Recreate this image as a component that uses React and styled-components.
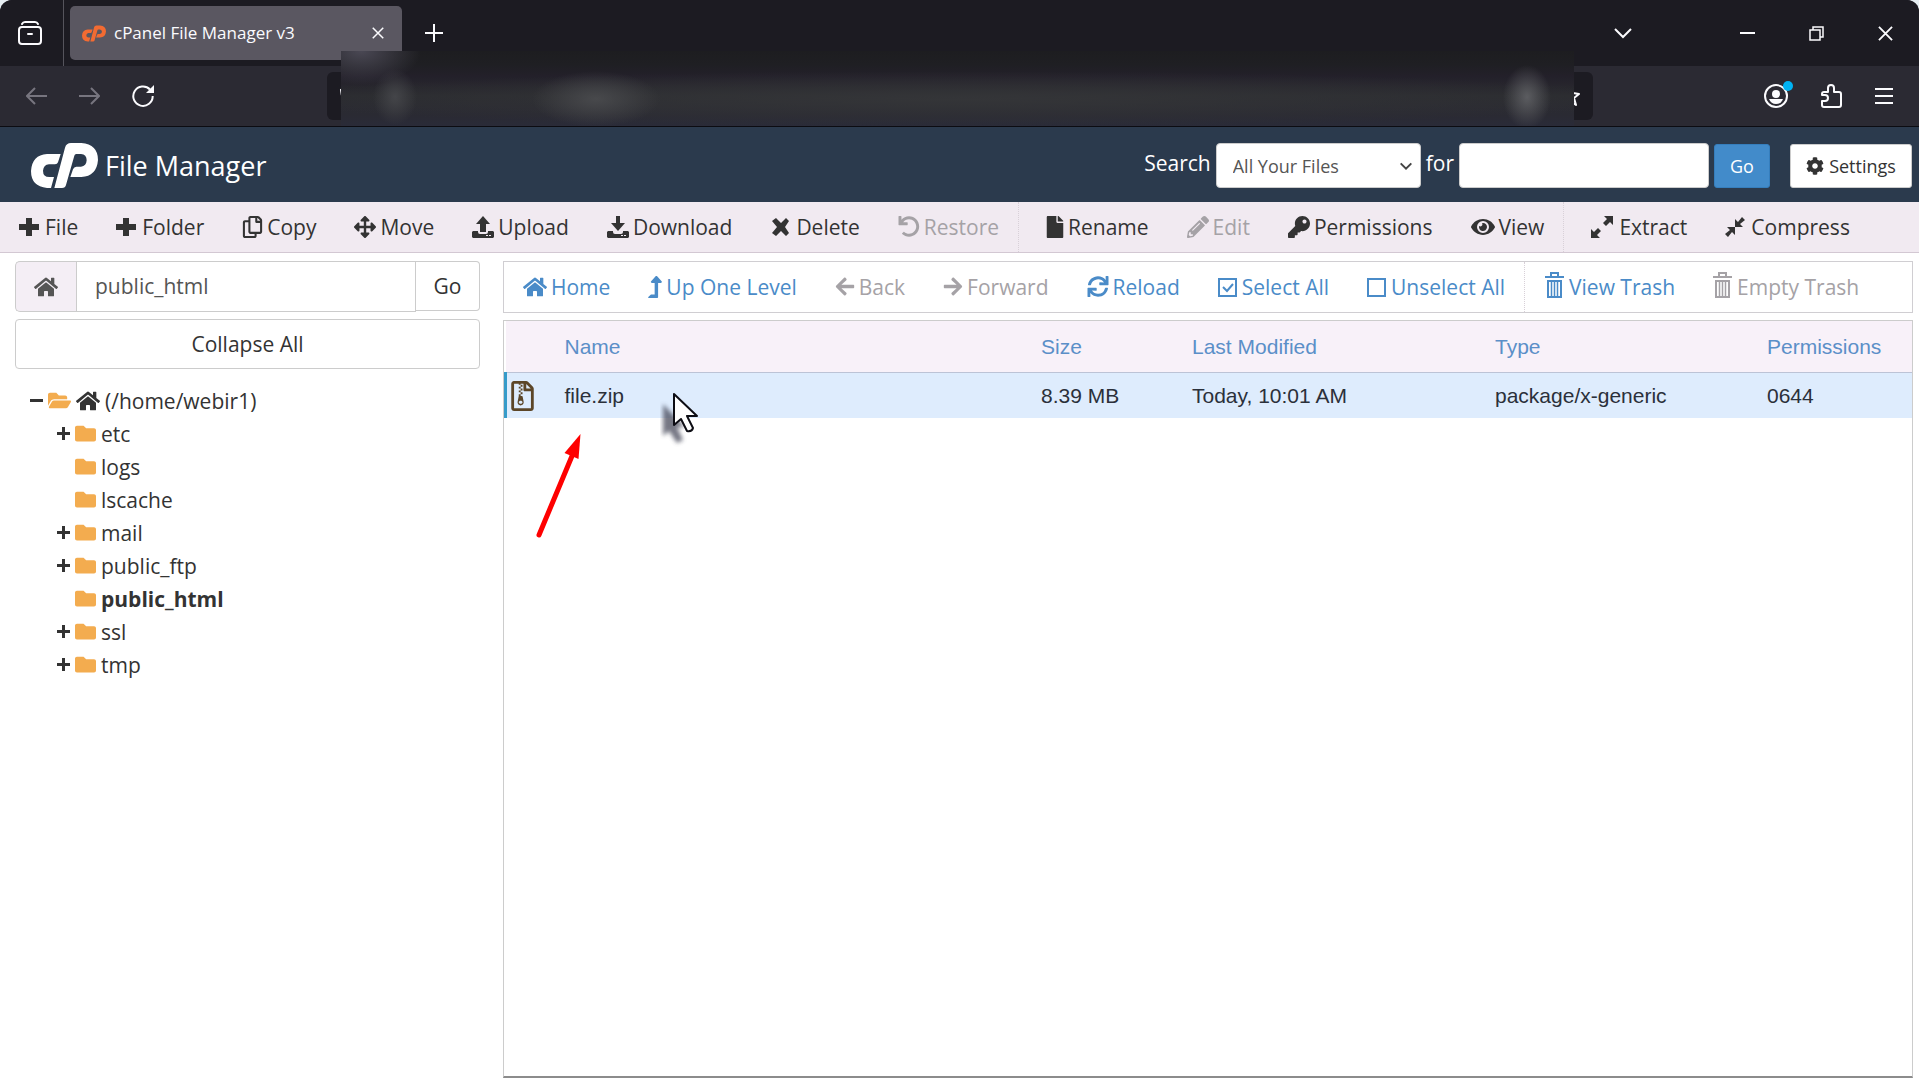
import React from 'react';
import styled, { createGlobalStyle } from 'styled-components';
import {
    FaArrowLeft, FaArrowRight, FaArrowsAlt, FaCog, FaEye, FaFile, FaFolder, FaFolderOpen,
    FaHome, FaKey, FaLevelUpAlt, FaPencilAlt, FaRegCopy, FaRegFileArchive, FaSync, FaUndo,
} from 'react-icons/fa';

const GlobalStyle = createGlobalStyle`
    * {
        box-sizing: border-box;
    }
    html, body, #root {
        height: 100%;
        margin: 0;
    }
    body {
        background-color: #e6eef2;
        color: #333;
        font-family: "Open Sans", "Noto Sans", sans-serif;
        font-size: 21px;
        line-height: 32px;
    }
    button, input, select {
        font: inherit;
        color: inherit;
        margin: 0;
    }
    button {
        padding: 0;
        border: none;
        background: none;
        white-space: nowrap;
    }
    svg {
        display: block;
        flex: none;
    }
`;

const Page = styled.div`
    display: flex;
    flex-direction: column;
    min-height: 100%;
    background-color: #fff;
    border-radius: 12px 12px 0 0;
    overflow: hidden;
`;

/* browser chrome */

const Chrome = styled.div`
    position: relative;
    background-color: #2b2a33;
    color: #fbfbfe;
    border-bottom: 1px solid #0c0c12;
`;

const TabStrip = styled.div`
    display: flex;
    align-items: center;
    height: 66px;
    background-color: #1c1b22;
`;

const FirefoxView = styled.button`
    display: flex;
    align-items: center;
    justify-content: center;
    width: 64px;
    height: 66px;
    padding-right: 4px;
    border-right: 1px solid #55545c;
`;

const Tab = styled.div`
    display: flex;
    align-items: center;
    gap: 8px;
    width: 332px;
    height: 54px;
    margin: 0 23px 0 6px;
    padding: 0 18px 0 12px;
    border-radius: 5px;
    background-color: #5a5761;
    font-size: 17px;
`;

const TabTitle = styled.span`
    flex: 1;
    white-space: nowrap;
`;

const ChromeButton = styled.button`
    display: flex;
    align-items: center;
    justify-content: center;
    color: ${props => (props.$dim ? '#77757f' : '#fbfbfe')};
`;

const WindowButtons = styled.div`
    display: flex;
    align-items: center;
    gap: 54px;
    margin-left: auto;
    padding-right: 26px;

    button:first-child {
        margin-right: 54px;
    }
`;

const NavBar = styled.div`
    display: flex;
    align-items: center;
    height: 60px;
    padding: 0 26px;
`;

const HistoryButtons = styled.div`
    display: flex;
    gap: 32px;
    width: 301px;
`;

const UrlBar = styled.div`
    display: flex;
    align-items: center;
    flex: 1;
    height: 48px;
    padding: 0 12px;
    border-radius: 6px;
    background-color: #1c1b22;
`;

const UrlInput = styled.input`
    flex: 1;
    border: none;
    outline: none;
    background: none;
`;

const BrowserTools = styled.div`
    display: flex;
    align-items: center;
    justify-content: flex-end;
    gap: 33px;
    width: 300px;

    svg {
        overflow: visible;
    }
`;

/* smudge over the address */
const Redaction = styled.div`
    position: absolute;
    top: 51px;
    bottom: 0;
    left: 341px;
    right: 345px;
    background:
        radial-gradient(60px 34px at 20px 0, #4a4854 0%, #4a485400 100%),
        radial-gradient(22px 28px at 54px 46px, #444549 0%, #44454900 100%),
        radial-gradient(64px 28px at 255px 48px, #48494c 0%, #48494c00 100%),
        radial-gradient(24px 32px at calc(100% - 47px) 46px, #5b5c60 0%, #5b5c6000 100%),
        radial-gradient(56% 28px at 50% 48px, #343538 0%, #34353800 100%),
        linear-gradient(#1d1d20 0%, #1f1f23 18%, #23202a 34%, #2b2c30 60%, #2a2a33 86%, #2a2b38 100%);
`;

/* file manager header */

const Header = styled.header`
    display: flex;
    align-items: center;
    justify-content: space-between;
    height: 75px;
    padding: 0 7px 0 31px;
    background-color: #2b3a4d;
    color: #fff;
`;

const Brand = styled.h1`
    display: flex;
    align-items: center;
    gap: 7px;
    margin: 0;
    padding-top: 2px;
    font-size: 27px;
    font-weight: 400;
`;

const SearchForm = styled.form`
    display: flex;
    align-items: center;
    gap: 5px;
    padding-top: 2px;

    label {
        padding-bottom: 6px;
    }
`;

const SelectBox = styled.div`
    display: grid;
    align-items: center;
    width: 205px;

    > * {
        grid-area: 1 / 1;
    }
    svg {
        justify-self: end;
        margin-right: 9px;
        pointer-events: none;
        color: #444;
    }
`;

const Select = styled.select`
    width: 100%;
    height: 45px;
    padding: 0 16px;
    border: 1px solid #ccc;
    border-radius: 4px;
    appearance: none;
    background-color: #fff;
    color: #555;
    font-size: 18px;
`;

const SearchInput = styled.input`
    width: 250px;
    height: 45px;
    padding: 0 16px;
    border: 1px solid #ccc;
    border-radius: 4px;
    background-color: #fff;
    color: #555;
`;

const HeaderButton = styled.button`
    display: flex;
    align-items: center;
    justify-content: center;
    gap: 5px;
    width: ${props => (props.$primary ? '56px' : '122px')};
    height: 44px;
    margin-left: ${props => (props.$primary ? '0' : '15px')};
    border: 1px solid ${props => (props.$primary ? '#357ebd' : '#ccc')};
    border-radius: 3px;
    background-color: ${props => (props.$primary ? '#428bca' : '#fff')};
    color: ${props => (props.$primary ? '#fff' : '#333')};
    font-size: 18px;
`;

/* toolbars */

const Toolbar = styled.div`
    display: flex;
    align-items: stretch;
    height: 51px;
    background-color: #f1eaf1;
    border-bottom: 1px solid #d3c8d3;
`;

const ToolDivider = styled.span`
    width: 9px;
    border-left: 1px dotted #d8d0d8;
`;

const ActionBar = styled(Toolbar)`
    height: 52px;
    background-color: #fff;
    border: 1px solid #d0ced2;
    color: #4a8bc8;

    ${ToolDivider} {
        width: 2px;
    }
`;

const Tool = styled.button`
    display: flex;
    align-items: center;
    gap: 4px;
    padding: 0 19px 1px;
    color: ${props => (props.disabled ? '#a5a2a6' : 'inherit')};
`;

/* body */

const Body = styled.main`
    display: flex;
    flex: 1;
    gap: 23px;
    padding: 8px 6px 1px 15px;
`;

const Sidebar = styled.nav`
    display: flex;
    flex-direction: column;
    gap: 7px;
    width: 465px;
`;

const PathForm = styled.form`
    display: flex;
    height: 51px;
`;

const PathHome = styled.button`
    display: flex;
    align-items: center;
    justify-content: center;
    width: 61px;
    border: 1px solid #ccc;
    border-right: none;
    border-radius: 5px 0 0 5px;
    background-color: #f4eef5;
    color: #555;
`;

const PathInput = styled.input`
    flex: 1;
    min-width: 0;
    padding: 0 18px 2px;
    border: 1px solid #ccc;
    color: #555;
`;

const PathGo = styled.button`
    width: 64px;
    height: 50px;
    border: 1px solid #ccc;
    border-left: none;
    border-radius: 0 4px 4px 0;
`;

const CollapseButton = styled.button`
    height: 50px;
    border: 1px solid #ccc;
    border-radius: 4px;
`;

const Tree = styled.ul`
    margin: 0;
    padding: ${props => (props.$nested ? '0 0 0 27px' : '8px 0 0 15px')};
    list-style: none;
`;

const TreeRow = styled.div`
    display: flex;
    align-items: center;
    gap: 5px;
    height: 33px;
    font-weight: ${props => (props.$current ? 700 : 400)};
    color: #333;
`;

const Toggle = styled.span`
    display: flex;
    width: 13px;
`;

const Content = styled.section`
    display: flex;
    flex: 1;
    flex-direction: column;
    gap: 7px;
    min-width: 0;
`;

const FilePane = styled.div`
    flex: 1;
    border: 1px solid #ccc;
    border-bottom: 2px solid #8c8c8c;
`;

const FileTable = styled.table`
    width: 100%;
    border-collapse: collapse;
    table-layout: fixed;
    font-family: "Liberation Sans", Arial, sans-serif;
    font-size: 21px;
    line-height: 24px;

    th, td {
        padding: 2px 0 0;
        text-align: left;
        font-weight: 400;
        white-space: nowrap;
    }
    th {
        height: 51px;
        border-bottom: 1px solid #bcc3d6;
        background-color: #f8f1f9;
        color: #5b8fc8;
    }
    td {
        height: 46px;
        background-color: #deecfd;
        color: #2b303a;
    }
    td:first-child {
        border-left: 3px solid #359bc9;
        padding-left: 4px;
        color: #5c4628;
    }
`;

const Col = styled.col`
    width: ${props => (props.$w ? `${props.$w}px` : 'auto')};
`;

/* pointer and hint arrow floating over the list */
const Overlay = styled.svg`
    position: absolute;
    left: 530px;
    top: 385px;
    pointer-events: none;
`;

/* icons */

const sized = (Icon, width, height) => styled(Icon)`
    width: ${width}px;
    height: ${height}px;
`;

const CopyIcon = sized(FaRegCopy, 21, 22);
const MoveIcon = sized(FaArrowsAlt, 22, 22);
const UndoIcon = sized(FaUndo, 22, 21);
const FileIcon = sized(FaFile, 18, 22);
const PencilIcon = sized(FaPencilAlt, 22, 22);
const KeyIcon = sized(FaKey, 22, 22);
const EyeIcon = sized(FaEye, 24, 22);
const HomeIcon = sized(FaHome, 24, 22);
const LevelUpIcon = sized(FaLevelUpAlt, 14, 22);
const BackIcon = sized(FaArrowLeft, 20, 21);
const ForwardIcon = sized(FaArrowRight, 20, 21);
const ReloadIcon = sized(FaSync, 22, 21);
const ZipIcon = sized(FaRegFileArchive, 23, 30);

const FolderIcon = styled(FaFolder)`
    width: 21px;
    height: 21px;
    color: #f3ac4f;
`;

const OpenFolderIcon = styled(FaFolderOpen)`
    width: 23px;
    height: 21px;
    color: #f3ac4f;
`;

const CpLogo = ({ width, height, color }) => (
    <svg width={width} height={height} viewBox="0 0 201 135" fill={color} aria-hidden="true">
        <path d="M48 33h41l-8 25q-2 6-9 6H54q-16 1-18 19 0 19 19 19h14l-9 33H48Q0 130 0 84 3 36 48 33z" />
        <path d="M70 135 102 14Q106 0 120 0h31q50 4 50 51-4 49-50 51h-33l8-23q3-8 10-8h14q16-2 17-19 0-18-17-19h-14q-5 0-6 5L105 126q-2 9-12 9z" />
    </svg>
);

const Plus = () => (
    <svg width="22" height="20" viewBox="0 0 22 20" fill="currentColor">
        <path d="M7 1h6v6h7v6h-7v6H7v-6H0V7h7z" />
    </svg>
);

const Tray = ({ up }) => (
    <svg width="22" height="22" viewBox="0 0 22 22" fill="currentColor">
        <path d={up ? 'M11 0l7 8h-4v8H8V8H4z' : 'M9 0h4v7h5l-7 8-7-8h5z'} />
        <path fillRule="evenodd" d="M1 15h5v1q0 2 2 2h6q2 0 2-2v-1h5l1 1v5l-1 1H1l-1-1v-5zM14 19h2v1h-2zm3 0h2v1h-2z" />
    </svg>
);

const Cross = () => (
    <svg width="22" height="20" viewBox="-2 0 22 20" fill="currentColor">
        <path d="M4 1l5 5 5-5 3 3-4 6 4 6-3 3-5-5-5 5-4-3 5-6-5-6z" />
    </svg>
);

const Extract = () => (
    <svg width="24" height="22" viewBox="0 0 24 22" fill="currentColor">
        <path d="M13 0h9v9l-3-3-4 4-3-3 4-4zM0 13l3 3 4-4 3 3-4 4 3 3H0z" />
    </svg>
);

const Compress = () => (
    <svg width="22" height="20" viewBox="0 0 22 20" fill="currentColor">
        <path d="M17 0l3 3-5 4 3 3h-8V2l3 3zM2 10h8v8l-3-3-4 5-3-3 5-4z" />
    </svg>
);

const Box = ({ checked }) => (
    <svg width="20" height="22" viewBox="0 0 20 22" fill="none" stroke="currentColor" strokeWidth="2">
        <path d="M1 3h17v17H1z" />
        {checked && <path d="M5 11l4 4 6-7" />}
    </svg>
);

const Trash = () => (
    <svg width="20" height="30" viewBox="0 0 20 30" fill="none" stroke="currentColor">
        <path strokeWidth="2" d="M0 5h19M6 4V1h7v3M2 9h15M3 8v17h13V8" />
        <path strokeWidth="1.5" d="M6.500 9v16M9.500 9v16M12.500 9v16" />
    </svg>
);

const Chevron = ({ size }) => (
    <svg width={size} height={size} viewBox="0 0 18 18" fill="none" stroke="currentColor" strokeWidth={size > 14 ? 2 : 3}>
        <path d="M1 5l8 8 8-8" />
    </svg>
);

const Close = ({ size }) => (
    <svg width={size} height={size} viewBox="0 0 16 16" fill="none" stroke="currentColor" strokeWidth="2">
        <path d="M1 1l14 14M15 1L1 15" />
    </svg>
);

const ToggleSign = ({ open }) => (
    <svg width="13" height="13" viewBox="0 0 13 13" fill="none" stroke="currentColor" strokeWidth="3">
        <path d={open ? 'M0 6.5h13' : 'M0 6.5h13M6.5 0v13'} />
    </svg>
);

const fileTools = [
    { label: 'File', icon: <Plus /> },
    { label: 'Folder', icon: <Plus /> },
    { label: 'Copy', icon: <CopyIcon /> },
    { label: 'Move', icon: <MoveIcon /> },
    { label: 'Upload', icon: <Tray up /> },
    { label: 'Download', icon: <Tray /> },
    { label: 'Delete', icon: <Cross /> },
    { label: 'Restore', icon: <UndoIcon />, disabled: true },
    { divider: true },
    { label: 'Rename', icon: <FileIcon /> },
    { label: 'Edit', icon: <PencilIcon />, disabled: true },
    { label: 'Permissions', icon: <KeyIcon /> },
    { label: 'View', icon: <EyeIcon /> },
    { divider: true },
    { label: 'Extract', icon: <Extract /> },
    { label: 'Compress', icon: <Compress /> },
];

const viewTools = [
    { label: 'Home', icon: <HomeIcon /> },
    { label: 'Up One Level', icon: <LevelUpIcon /> },
    { label: 'Back', icon: <BackIcon />, disabled: true },
    { label: 'Forward', icon: <ForwardIcon />, disabled: true },
    { label: 'Reload', icon: <ReloadIcon /> },
    { label: 'Select All', icon: <Box checked /> },
    { label: 'Unselect All', icon: <Box /> },
    { divider: true },
    { label: 'View Trash', icon: <Trash /> },
    { label: 'Empty Trash', icon: <Trash />, disabled: true },
];

const folders = [
    { name: 'etc', expandable: true },
    { name: 'logs' },
    { name: 'lscache' },
    { name: 'mail', expandable: true },
    { name: 'public_ftp', expandable: true },
    { name: 'public_html', current: true },
    { name: 'ssl', expandable: true },
    { name: 'tmp', expandable: true },
];

const renderTools = tools => tools.map((tool, i) => (
    tool.divider
        ? <ToolDivider key={i} />
        : <Tool key={i} type="button" disabled={tool.disabled}>{tool.icon}{tool.label}</Tool>
));

function BrowserChrome() {
    return (
        <Chrome>
            <TabStrip>
                <FirefoxView type="button" aria-label="Firefox View">
                    <svg width="24" height="24" viewBox="0 0 24 24" fill="none" stroke="currentColor" strokeWidth="2" strokeLinecap="round">
                        <rect x="1" y="6" width="22" height="17" rx="3" />
                        <path d="M4 3q1-2 3-2h10q2 0 3 2M10 13h4" />
                    </svg>
                </FirefoxView>
                <Tab>
                    <CpLogo width={24} height={17} color="#f36b32" />
                    <TabTitle>cPanel File Manager v3</TabTitle>
                    <ChromeButton type="button" aria-label="Close tab"><Close size={12} /></ChromeButton>
                </Tab>
                <ChromeButton type="button" aria-label="New tab">
                    <svg width="18" height="18" viewBox="0 0 18 18" fill="none" stroke="currentColor" strokeWidth="2">
                        <path d="M9 0v18M0 9h18" />
                    </svg>
                </ChromeButton>
                <WindowButtons>
                    <ChromeButton type="button" aria-label="List tabs"><Chevron size={18} /></ChromeButton>
                    <ChromeButton type="button" aria-label="Minimize">
                        <svg width="15" height="15" viewBox="0 0 15 15"><path d="M0 6h15v2H0z" fill="currentColor" /></svg>
                    </ChromeButton>
                    <ChromeButton type="button" aria-label="Restore">
                        <svg width="15" height="15" viewBox="0 0 15 15" fill="none" stroke="currentColor" strokeWidth="1.5">
                            <path d="M1 4h10v10H1zM4 4V1h10v10h-3" />
                        </svg>
                    </ChromeButton>
                    <ChromeButton type="button" aria-label="Close"><Close size={15} /></ChromeButton>
                </WindowButtons>
            </TabStrip>
            <NavBar>
                <HistoryButtons>
                    <ChromeButton type="button" aria-label="Back" $dim>
                        <svg width="21" height="18" viewBox="0 0 21 18" fill="none" stroke="currentColor" strokeWidth="2">
                            <path d="M21 9H1M9 1L1 9l8 8" />
                        </svg>
                    </ChromeButton>
                    <ChromeButton type="button" aria-label="Forward" $dim>
                        <svg width="21" height="18" viewBox="0 0 21 18" fill="none" stroke="currentColor" strokeWidth="2">
                            <path d="M0 9h20M12 1l8 8-8 8" />
                        </svg>
                    </ChromeButton>
                    <ChromeButton type="button" aria-label="Reload">
                        <svg width="22" height="22" viewBox="0 0 22 22" fill="none" stroke="currentColor" strokeWidth="2">
                            <path d="M18 4.500A9.700 9.700 0 1 0 20.700 11" />
                            <path d="M22 0v8h-8z" fill="currentColor" stroke="none" />
                        </svg>
                    </ChromeButton>
                </HistoryButtons>
                <UrlBar>
                    <svg width="18" height="20" viewBox="0 0 18 20" fill="none" stroke="currentColor" strokeWidth="2">
                        <path d="M9 1l8 3q0 11-8 15Q3 15 2 4z" />
                    </svg>
                    <UrlInput type="text" aria-label="Address" />
                    <svg width="21" height="20" viewBox="0 0 21 20" fill="none" stroke="currentColor" strokeWidth="2" strokeLinejoin="round">
                        <path d="M10 1l3 6 6 1-5 4 2 7-6-4-6 4 2-7-5-4 6-1z" />
                    </svg>
                </UrlBar>
                <BrowserTools>
                    <ChromeButton type="button" aria-label="Account">
                        <svg width="24" height="28" viewBox="0 0 24 28">
                            <circle cx="12" cy="14" r="11" fill="none" stroke="currentColor" strokeWidth="2" />
                            <circle cx="12" cy="12" r="4" fill="currentColor" />
                            <path d="M5 17h14q-2 5-7 5t-7-5z" fill="currentColor" />
                            <circle cx="24" cy="4" r="5" fill="#00b3f4" />
                        </svg>
                    </ChromeButton>
                    <ChromeButton type="button" aria-label="Extensions">
                        <svg width="21" height="24" viewBox="0 0 21 24" fill="none" stroke="currentColor" strokeWidth="2" strokeLinejoin="round">
                            <path d="M7 8V4q0-3 3-3t3 3v4h5q2 0 2 2v11q0 2-2 2H3q-2 0-2-2v-4h3q3 0 3-3t-3-3H1v-1q0-2 2-2z" />
                        </svg>
                    </ChromeButton>
                    <ChromeButton type="button" aria-label="Menu">
                        <svg width="18" height="16" viewBox="0 0 18 16" fill="none" stroke="currentColor" strokeWidth="2">
                            <path d="M0 1h18M0 8h18M0 15h18" />
                        </svg>
                    </ChromeButton>
                </BrowserTools>
            </NavBar>
            <Redaction />
        </Chrome>
    );
}

function App() {
    return (
        <Page>
            <GlobalStyle />
            <BrowserChrome />
            <Header>
                <Brand>
                    <CpLogo width={67} height={45} color="#fff" />
                    File Manager
                </Brand>
                <SearchForm>
                    <label htmlFor="scope">Search</label>
                    <SelectBox>
                        <Select id="scope">
                            <option>All Your Files</option>
                        </Select>
                        <Chevron size={12} />
                    </SelectBox>
                    <label htmlFor="query">for</label>
                    <SearchInput id="query" type="text" />
                    <HeaderButton type="button" $primary>Go</HeaderButton>
                    <HeaderButton type="button"><FaCog size={18} />Settings</HeaderButton>
                </SearchForm>
            </Header>
            <Toolbar>{renderTools(fileTools)}</Toolbar>
            <Body>
                <Sidebar>
                    <PathForm>
                        <PathHome type="button" aria-label="Home"><HomeIcon /></PathHome>
                        <PathInput type="text" aria-label="Path" defaultValue="public_html" />
                        <PathGo type="button">Go</PathGo>
                    </PathForm>
                    <CollapseButton type="button">Collapse All</CollapseButton>
                    <Tree>
                        <li>
                            <TreeRow>
                                <Toggle><ToggleSign open /></Toggle>
                                <OpenFolderIcon />
                                <HomeIcon />
                                (/home/webir1)
                            </TreeRow>
                            <Tree $nested>
                                {folders.map(folder => (
                                    <li key={folder.name}>
                                        <TreeRow $current={folder.current}>
                                            <Toggle>{folder.expandable && <ToggleSign />}</Toggle>
                                            <FolderIcon />
                                            {folder.name}
                                        </TreeRow>
                                    </li>
                                ))}
                            </Tree>
                        </li>
                    </Tree>
                </Sidebar>
                <Content>
                    <ActionBar>{renderTools(viewTools)}</ActionBar>
                    <FilePane>
                        <FileTable>
                            <colgroup>
                                <Col $w={59} />
                                <Col />
                                <Col $w={151} />
                                <Col $w={303} />
                                <Col $w={272} />
                                <Col $w={145} />
                            </colgroup>
                            <thead>
                                <tr>
                                    <th aria-label="Icon" />
                                    <th>Name</th>
                                    <th>Size</th>
                                    <th>Last Modified</th>
                                    <th>Type</th>
                                    <th>Permissions</th>
                                </tr>
                            </thead>
                            <tbody>
                                <tr>
                                    <td><ZipIcon /></td>
                                    <td>file.zip</td>
                                    <td>8.39 MB</td>
                                    <td>Today, 10:01 AM</td>
                                    <td>package/x-generic</td>
                                    <td>0644</td>
                                </tr>
                            </tbody>
                        </FileTable>
                    </FilePane>
                </Content>
            </Body>
            <Overlay width="180" height="160" viewBox="530 385 180 160" aria-hidden="true">
                <defs>
                    <filter id="soft"><feGaussianBlur stdDeviation="2" /></filter>
                </defs>
                <path d="M539 535L572 456" stroke="#fe0000" strokeWidth="5" strokeLinecap="round" />
                <path d="M580.500 434l-2 25-14-6z" fill="#fe0000" />
                <path d="M663 404v32l6-5 8 12 6-3-6-13h8z" fill="#4a4b5c" opacity="0.75" filter="url(#soft)" />
                <path d="M674 394v31l7-6 6 12q5 1 6-3l-6-12h10z" fill="#fff" stroke="#0d0d14" strokeWidth="2" strokeLinejoin="round" />
            </Overlay>
        </Page>
    );
}

export default App;
